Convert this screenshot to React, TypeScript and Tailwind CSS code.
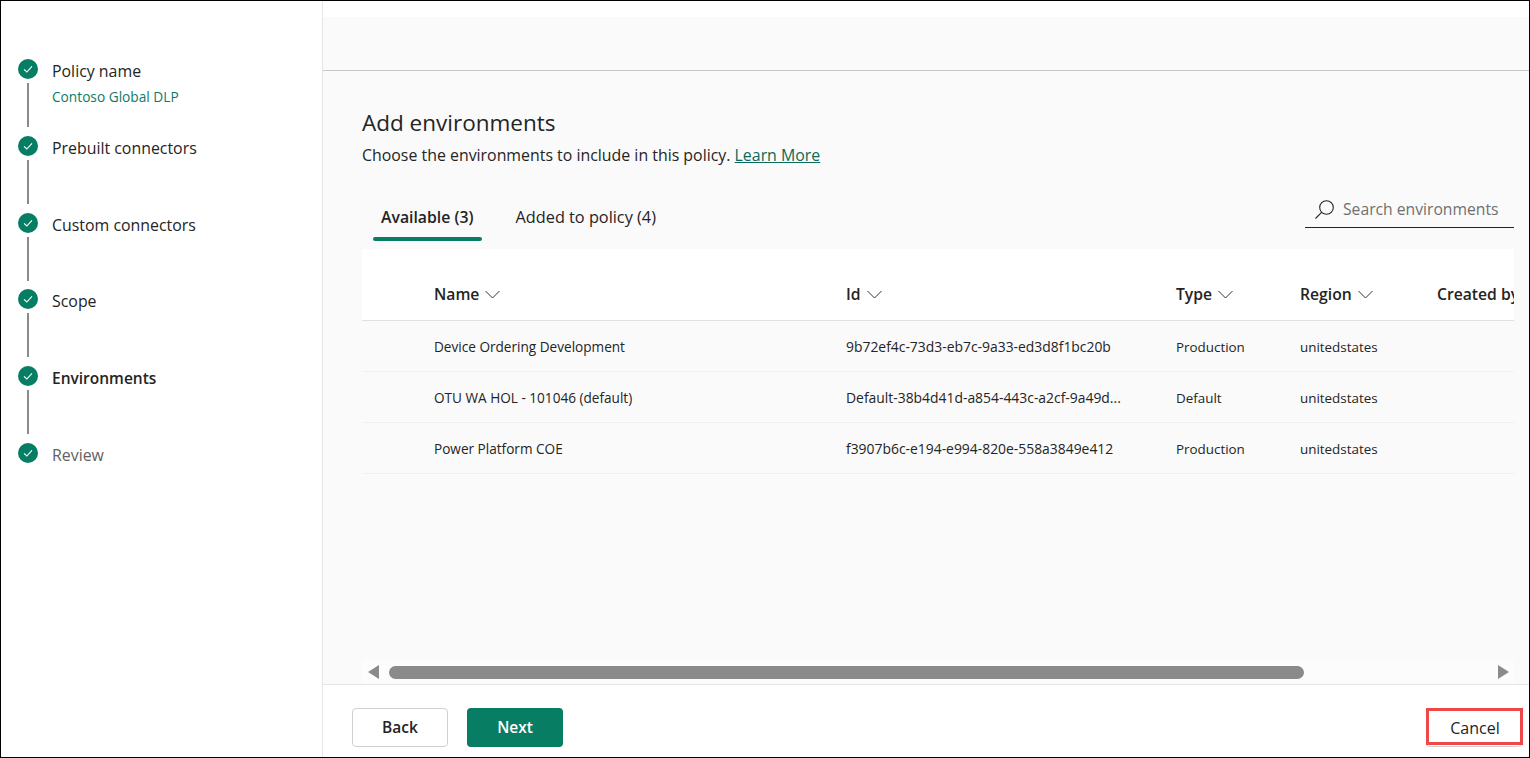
const steps = [
  { label: "Policy name", sub: "Contoso Global DLP" },
  { label: "Prebuilt connectors" },
  { label: "Custom connectors" },
  { label: "Scope" },
  { label: "Environments", active: true },
  { label: "Review", muted: true, last: true },
];

const rows = [
  ["Device Ordering Development", "9b72ef4c-73d3-eb7c-9a33-ed3d8f1bc20b", "Production", "unitedstates"],
  ["OTU WA HOL - 101046 (default)", "Default-38b4d41d-a854-443c-a2cf-9a49d...", "Default", "unitedstates"],
  ["Power Platform COE", "f3907b6c-e194-e994-820e-558a3849e412", "Production", "unitedstates"],
];

function Check() {
  return (
    <div className="flex h-5 w-5 shrink-0 items-center justify-center rounded-full bg-[#077d64]">
      <svg width="12" height="12" viewBox="0 0 12 12" fill="none" stroke="white" strokeWidth="1.1">
        <path d="M2 6.4 4.8 9 10 3.4" />
      </svg>
    </div>
  );
}

function Head({ label, width }: { label: string; width: string }) {
  return (
    <div className={`flex shrink-0 items-center gap-[6px] ${width}`}>
      <span className="text-[15.7px] font-semibold whitespace-nowrap">{label}</span>
      <svg width="15" height="9" viewBox="0 0 15 9" fill="none" stroke="#333" strokeWidth="1" className="mb-[2px]">
        <path d="M.5 1 7.5 8 14.5 1" />
      </svg>
    </div>
  );
}

export default function App() {
  return (
    <div
      className="flex h-[758px] w-[1530px] overflow-hidden border border-black bg-white text-[#242424]"
      style={{ fontFamily: '"Open Sans", sans-serif' }}
    >
      {/* stepper */}
      <aside className="w-[321px] shrink-0 pl-[17px] pt-[58px]">
        {steps.map((s) => (
          <div key={s.label} className="flex h-[76.8px] gap-[14px]">
            <div className="flex w-5 flex-col items-center">
              <Check />
              {!s.last && <div className="mt-[4px] h-[44px] w-[2px] bg-[#8a8a8a]" />}
            </div>
            <div className="pt-[2px]">
              <div className={`leading-5 ${s.active ? "text-[15.5px] font-semibold" : "text-[15.9px]"} ${s.muted ? "text-[#616161]" : ""}`}>
                {s.label}
              </div>
              {s.sub && <div className="mt-[8px] text-[13.7px] leading-4 text-[#0c7a6b]">{s.sub}</div>}
            </div>
          </div>
        ))}
      </aside>

      <main className="flex min-w-0 flex-1 flex-col border-l border-[#e6e6e6]">
        <div className="mt-[16px] flex min-h-0 flex-1 flex-col bg-[#fafafa]">
          <div className="h-[54px] shrink-0 border-b border-[#c8c8c8]" />
          <div className="flex min-h-0 flex-1 flex-col pl-[39px] pr-[15px]">
            <h1 className="mt-[36px] text-[22.5px] leading-8">Add environments</h1>
            <p className="mt-[4px] text-[15.9px] leading-6">
              Choose the environments to include in this policy.{" "}
              <a className="text-[#0b6a5b] underline">Learn More</a>
            </p>

            {/* tabs and search */}
            <div className="mt-[28px] flex h-[54px] shrink-0 justify-between">
              <div className="flex pl-[11px]">
                <div className="flex h-[46px] flex-col items-center justify-between">
                  <span className="mt-[10px] px-2 text-[15.8px] leading-6 font-semibold">Available (3)</span>
                  <div className="h-[4px] w-full rounded-full bg-[#077d64]" />
                </div>
                <span className="mt-[10px] ml-[34px] text-[16.3px] leading-6">Added to policy (4)</span>
              </div>
              <div className="flex h-[33px] w-[209px] items-center gap-[7px] border-b border-[#242424] pb-[2px] pl-[9px]">
                <svg width="22" height="22" viewBox="0 0 22 22" fill="none" stroke="#242424" strokeWidth="1.1">
                  <circle cx="12.5" cy="8.5" r="6.8" />
                  <path d="M7.6 13.4 1.5 19.5" />
                </svg>
                <span className="text-[15.7px] text-[#707070]">Search environments</span>
              </div>
            </div>

            {/* table */}
            <div className="flex min-h-0 flex-1 flex-col overflow-hidden">
              <div className="flex h-[72px] shrink-0 items-end border-b border-[#e0e0e0] bg-white pb-[13px] pl-[72px]">
                <Head label="Name" width="w-[412px]" />
                <Head label="Id" width="w-[330px]" />
                <Head label="Type" width="w-[124px]" />
                <Head label="Region" width="w-[137px]" />
                <span className="text-[15.7px] font-semibold whitespace-nowrap">Created by</span>
              </div>
              {rows.map((r) => (
                <div key={r[0]} className="flex h-[51px] shrink-0 items-center border-b border-[#f0f0f0] pl-[72px] pt-[3px]">
                  <span className="w-[412px] shrink-0 text-[13.6px]">{r[0]}</span>
                  <span className="w-[330px] shrink-0 text-[13.9px]">{r[1]}</span>
                  <span className="w-[124px] shrink-0 text-[13.4px]">{r[2]}</span>
                  <span className="shrink-0 text-[13.4px]">{r[3]}</span>
                </div>
              ))}
              <div className="flex-1" />
              {/* horizontal scrollbar */}
              <div className="flex h-[24px] shrink-0 items-center bg-[#fcfcfc] pl-[6px] pr-[5px]">
                <div className="h-0 w-0 border-y-[7px] border-r-[11px] border-y-transparent border-r-[#8a8a8a]" />
                <div className="ml-[10px] h-[13px] w-[915px] rounded-full bg-[#8a8a8a]" />
                <div className="ml-auto h-0 w-0 border-y-[7px] border-l-[11px] border-y-transparent border-l-[#8a8a8a]" />
              </div>
            </div>
          </div>

          {/* footer */}
          <div className="flex h-[73px] shrink-0 items-start justify-between border-t border-[#e6e6e6] bg-white pl-[29px] pr-[7px] pt-[23px]">
            <div className="flex gap-[19px]">
              <button className="h-[39px] w-[96px] rounded-[4px] border border-[#d1d1d1] bg-white pt-[1px] text-[15.5px] font-semibold">Back</button>
              <button className="h-[39px] w-[96px] rounded-[4px] bg-[#077d64] pt-[1px] text-[15.5px] font-semibold text-white">Next</button>
            </div>
            <button className="relative h-[39px] w-[96px] rounded-[4px] border border-[#d1d1d1] bg-white pl-[2px] text-[16px] font-medium">
              Cancel
              <span className="absolute -left-[1px] -top-[1px] h-[37px] w-[97px] border-[3px] border-[#f04848]" />
            </button>
          </div>
        </div>
      </main>
    </div>
  );
}
